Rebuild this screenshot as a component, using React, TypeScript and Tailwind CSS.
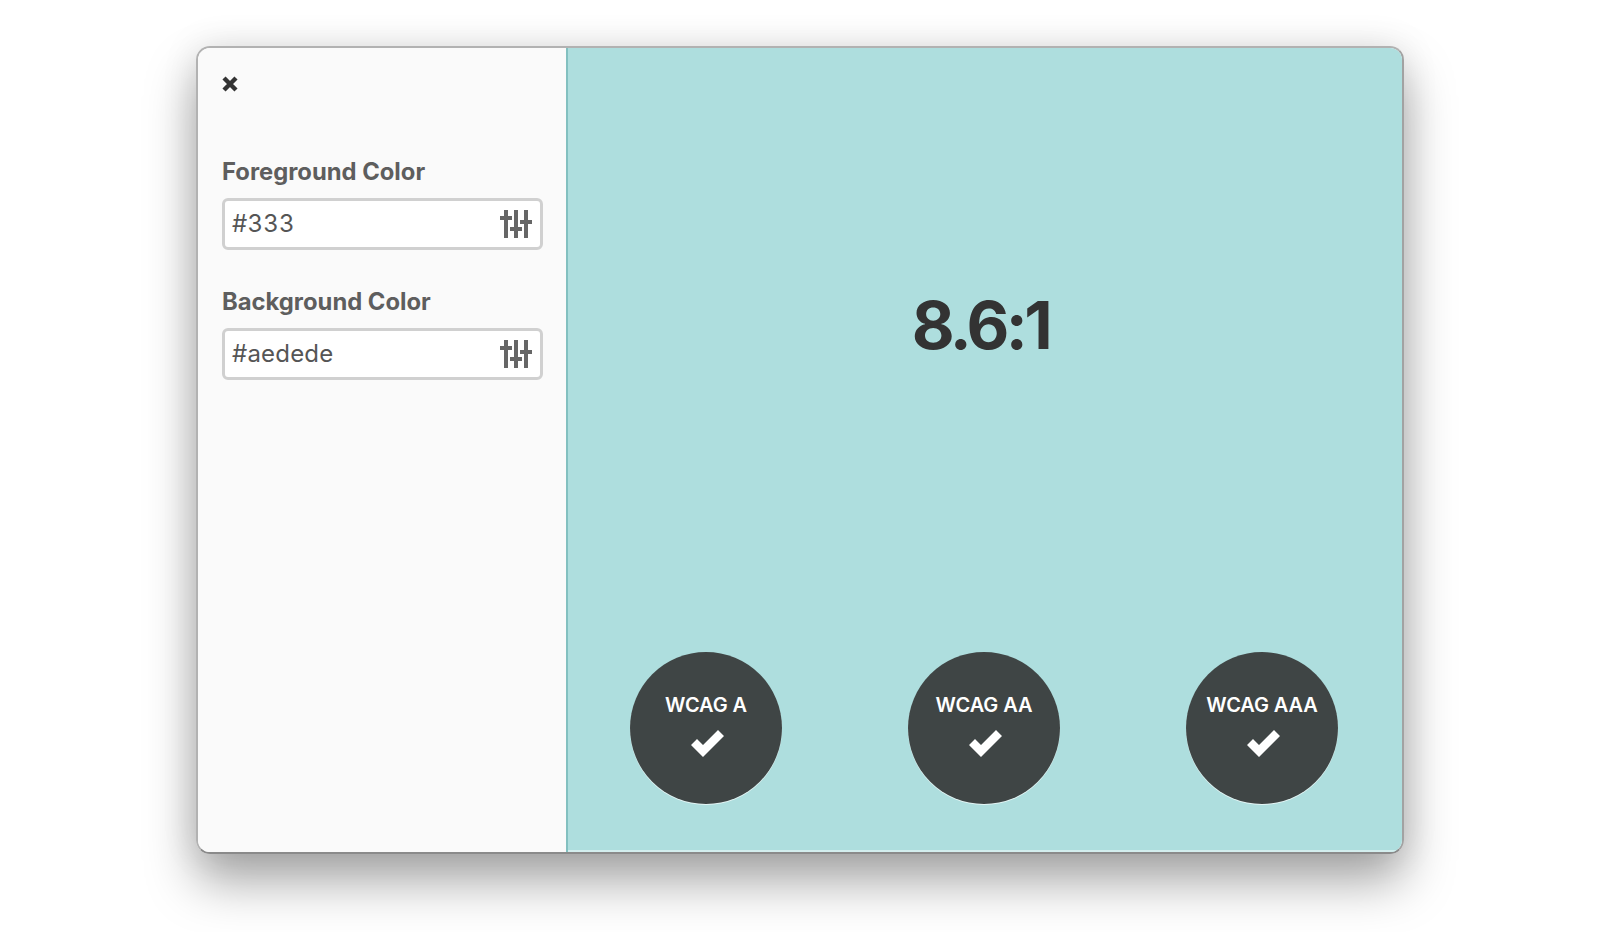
const FONT = "font-['Inter','Liberation_Sans',sans-serif]";

function CloseIcon() {
  return (
    <svg width="16" height="16" viewBox="0 0 16 16" className="block">
      <path d="M2 2 L14 14 M14 2 L2 14" stroke="#333" strokeWidth="4.4" fill="none" />
    </svg>
  );
}

function SlidersIcon() {
  return (
    <svg width="32" height="28" viewBox="0 0 32 28" className="block shrink-0" fill="#666">
      <rect x="4" y="0" width="4" height="28" />
      <rect x="0" y="6" width="12" height="4" />
      <rect x="14" y="0" width="4" height="28" />
      <rect x="10" y="17" width="12" height="4" />
      <rect x="24" y="0" width="4" height="28" />
      <rect x="20" y="10" width="12" height="4" />
    </svg>
  );
}

function CheckIcon() {
  return (
    <svg width="33" height="27" viewBox="0 0 33 27" className="block" fill="#fff">
      <polygon points="27,0 33,6 12,27 0,15 6,9 12,15" />
    </svg>
  );
}

function ColorField({ label, value }: { label: string; value: string }) {
  return (
    <div>
      <div className="text-[23.8px] leading-[29px] font-bold text-[#5e5e5e]">{label}</div>
      <div className="mt-[12px] flex h-[52px] items-center justify-between rounded-[6px] border-[3px] border-[#d0d0d0] bg-white pl-[7px] pr-[8px]">
        <span className="text-[24px] tracking-[0.2px] tabular-nums text-[#555]">{value}</span>
        <SlidersIcon />
      </div>
    </div>
  );
}

function Badge({ label }: { label: string }) {
  return (
    <div className="flex h-[152px] w-[152px] flex-col items-center rounded-full bg-[#3f4545] pt-[41px] shadow-[0_1px_0_#e4f5f5]">
      <div className="text-[20px] leading-[24px] font-semibold tracking-[-0.1px] text-white">{label}</div>
      <div className="ml-[2px] mt-[13px]"><CheckIcon /></div>
    </div>
  );
}

export default function App() {
  return (
    <div className={`${FONT} flex h-[932px] justify-center overflow-hidden bg-white pt-[46px]`}>
      <div className="flex h-[808px] w-[1208px] overflow-hidden rounded-[14px] border-2 border-[#b2b2b2] border-b-[#8a8a8a] border-r-[#a2a2a2] shadow-[0_28px_50px_rgba(0,0,0,0.34),0_0_36px_rgba(0,0,0,0.1)]">
        <div className="w-[370px] shrink-0 border-r-2 border-[#82c0c0] bg-[#fafafa] pl-[24px] pr-[23px] pt-[28px]">
          <CloseIcon />
          <div className="mt-[65px] flex flex-col gap-[37px]">
            <ColorField label="Foreground Color" value="#333" />
            <ColorField label="Background Color" value="#aedede" />
          </div>
        </div>
        <div className="flex flex-1 flex-col items-center justify-between bg-[#aedede] pb-[48px] pl-[62px] pr-[64px] pt-[237px] text-[#333] shadow-[inset_0_-2px_0_#d3eeee]">
          <div className="pr-[7px] text-[66px] leading-[80px] font-bold tracking-[-3.5px]">8.6:1</div>
          <div className="flex w-full justify-between">
            <Badge label="WCAG A" />
            <Badge label="WCAG AA" />
            <Badge label="WCAG AAA" />
          </div>
        </div>
      </div>
    </div>
  );
}
